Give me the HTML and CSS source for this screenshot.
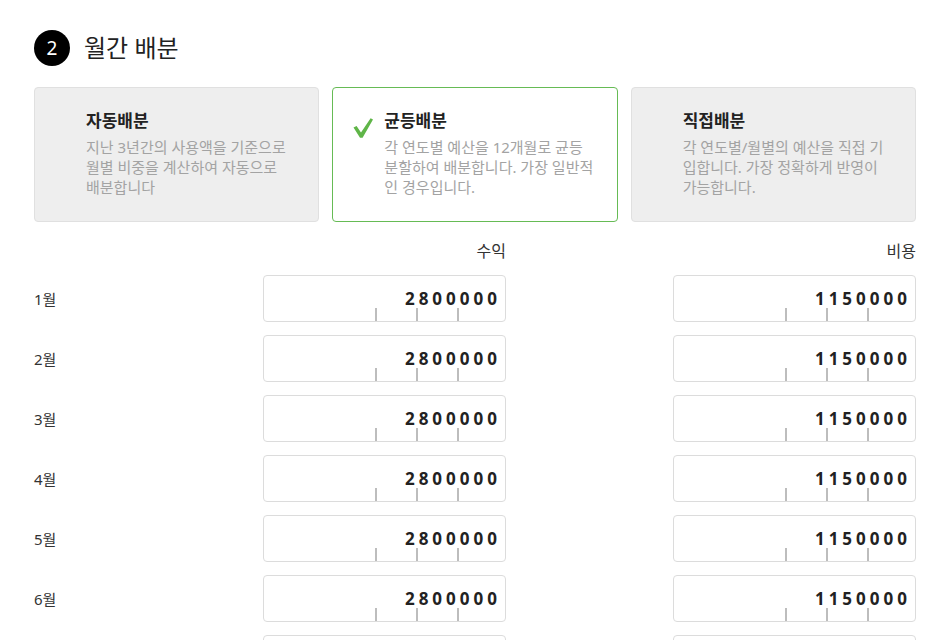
FILE: index.html
```html
<!DOCTYPE html>
<html lang="ko">
<head>
<meta charset="utf-8">
<title>월간 배분</title>
<link rel="stylesheet" href="styles.css">
</head>
<body>
<div class="page">
  <div class="step-head">
    <span class="step-num">2</span>
    <h2 class="step-title">월간 배분</h2>
  </div>

  <div class="cards">
    <div class="card">
      <div class="card-title">자동배분</div>
      <p class="card-desc">지난 3년간의 사용액을 기준으로<br>월별 비중을 계산하여 자동으로<br>배분합니다</p>
    </div>
    <div class="card card-selected">
      <svg class="check" viewBox="0 0 20 20" width="20" height="20" aria-hidden="true">
        <path d="M0.5 9.6 L3.6 7.9 L8 14.4 L17.6 0.2 L20 1.6 L9.6 19.8 L7 19.8 Z" fill="#5fb548"/>
      </svg>
      <div class="card-title">균등배분</div>
      <p class="card-desc">각 연도별 예산을 12개월로 균등<br>분할하여 배분합니다. 가장 일반적<br>인 경우입니다.</p>
    </div>
    <div class="card">
      <div class="card-title">직접배분</div>
      <p class="card-desc">각 연도별/월별의 예산을 직접 기<br>입합니다. 가장 정확하게 반영이<br>가능합니다.</p>
    </div>
  </div>

  <div class="table">
    <div></div>
    <div class="col-head">수익</div>
    <div class="col-head">비용</div>

    <div class="month">1월</div>
    <div class="cell"><div class="field"><span class="value">2800000</span><i class="tick t1"></i><i class="tick t2"></i><i class="tick t3"></i></div></div>
    <div class="cell"><div class="field"><span class="value">1150000</span><i class="tick t1"></i><i class="tick t2"></i><i class="tick t3"></i></div></div>

    <div class="month">2월</div>
    <div class="cell"><div class="field"><span class="value">2800000</span><i class="tick t1"></i><i class="tick t2"></i><i class="tick t3"></i></div></div>
    <div class="cell"><div class="field"><span class="value">1150000</span><i class="tick t1"></i><i class="tick t2"></i><i class="tick t3"></i></div></div>

    <div class="month">3월</div>
    <div class="cell"><div class="field"><span class="value">2800000</span><i class="tick t1"></i><i class="tick t2"></i><i class="tick t3"></i></div></div>
    <div class="cell"><div class="field"><span class="value">1150000</span><i class="tick t1"></i><i class="tick t2"></i><i class="tick t3"></i></div></div>

    <div class="month">4월</div>
    <div class="cell"><div class="field"><span class="value">2800000</span><i class="tick t1"></i><i class="tick t2"></i><i class="tick t3"></i></div></div>
    <div class="cell"><div class="field"><span class="value">1150000</span><i class="tick t1"></i><i class="tick t2"></i><i class="tick t3"></i></div></div>

    <div class="month">5월</div>
    <div class="cell"><div class="field"><span class="value">2800000</span><i class="tick t1"></i><i class="tick t2"></i><i class="tick t3"></i></div></div>
    <div class="cell"><div class="field"><span class="value">1150000</span><i class="tick t1"></i><i class="tick t2"></i><i class="tick t3"></i></div></div>

    <div class="month">6월</div>
    <div class="cell"><div class="field"><span class="value">2800000</span><i class="tick t1"></i><i class="tick t2"></i><i class="tick t3"></i></div></div>
    <div class="cell"><div class="field"><span class="value">1150000</span><i class="tick t1"></i><i class="tick t2"></i><i class="tick t3"></i></div></div>

    <div class="month">7월</div>
    <div class="cell"><div class="field"><span class="value">2800000</span><i class="tick t1"></i><i class="tick t2"></i><i class="tick t3"></i></div></div>
    <div class="cell"><div class="field"><span class="value">1150000</span><i class="tick t1"></i><i class="tick t2"></i><i class="tick t3"></i></div></div>
  </div>
</div>
</body>
</html>
```

FILE: styles.css
```css
* { box-sizing: border-box; }

html, body {
  margin: 0;
  padding: 0;
  background: #fff;
}

body {
  font-family: "Noto Sans", "Noto Sans CJK KR", sans-serif;
  color: #222;
}

.page {
  width: 882px;
  margin-left: 34px;
  padding-top: 30px;
}

.step-head {
  display: flex;
  align-items: center;
  height: 36px;
}

.step-num {
  width: 36px;
  height: 36px;
  border-radius: 50%;
  background: #000;
  color: #fff;
  display: flex;
  align-items: center;
  justify-content: center;
  font-size: 19px;
  line-height: 1;
}

.step-title {
  margin: 0 0 0 14px;
  font-size: 24px;
  font-weight: 400;
  color: #222;
  line-height: 36px;
}

.cards {
  display: grid;
  grid-template-columns: repeat(3, 1fr);
  gap: 13px;
  margin-top: 21px;
}

.card {
  position: relative;
  height: 135px;
  background: #eeeeee;
  border: 1px solid #e0e0e0;
  border-radius: 4px;
  padding: 22px 12px 0 51px;
}

.card-selected {
  background: #fff;
  border-color: #66bb55;
}

.check {
  position: absolute;
  left: 20px;
  top: 30px;
}

.card-title {
  font-size: 17px;
  font-weight: 700;
  line-height: 22px;
  color: #222;
}

.card-desc {
  margin: 5px 0 0;
  font-size: 15px;
  line-height: 20px;
  color: #a3a3a3;
  white-space: nowrap;
}

.table {
  display: grid;
  grid-template-columns: 1fr 410px 410px;
  grid-auto-rows: 47px;
  grid-template-rows: 22px;
  row-gap: 13px;
  margin-top: 18px;
}

.col-head {
  text-align: right;
  font-size: 16px;
  line-height: 22px;
  color: #333;
}

.month {
  align-self: center;
  font-size: 15px;
  line-height: 20px;
  color: #333;
}

.cell {
  display: flex;
  justify-content: flex-end;
}

.field {
  position: relative;
  width: 243px;
  height: 47px;
  border: 1px solid #dcdcdc;
  border-radius: 4px;
  display: flex;
  align-items: center;
  justify-content: flex-end;
  padding-right: 4px;
}

.value {
  font-family: "Noto Sans", sans-serif;
  font-weight: 700;
  font-size: 17px;
  letter-spacing: 4px;
  color: #222;
  line-height: 20px;
}

.tick {
  position: absolute;
  bottom: 0;
  width: 2px;
  height: 13px;
  background: #bdbdbd;
}

.t1 { left: 111px; }
.t2 { left: 152px; }
.t3 { left: 193px; }
```
